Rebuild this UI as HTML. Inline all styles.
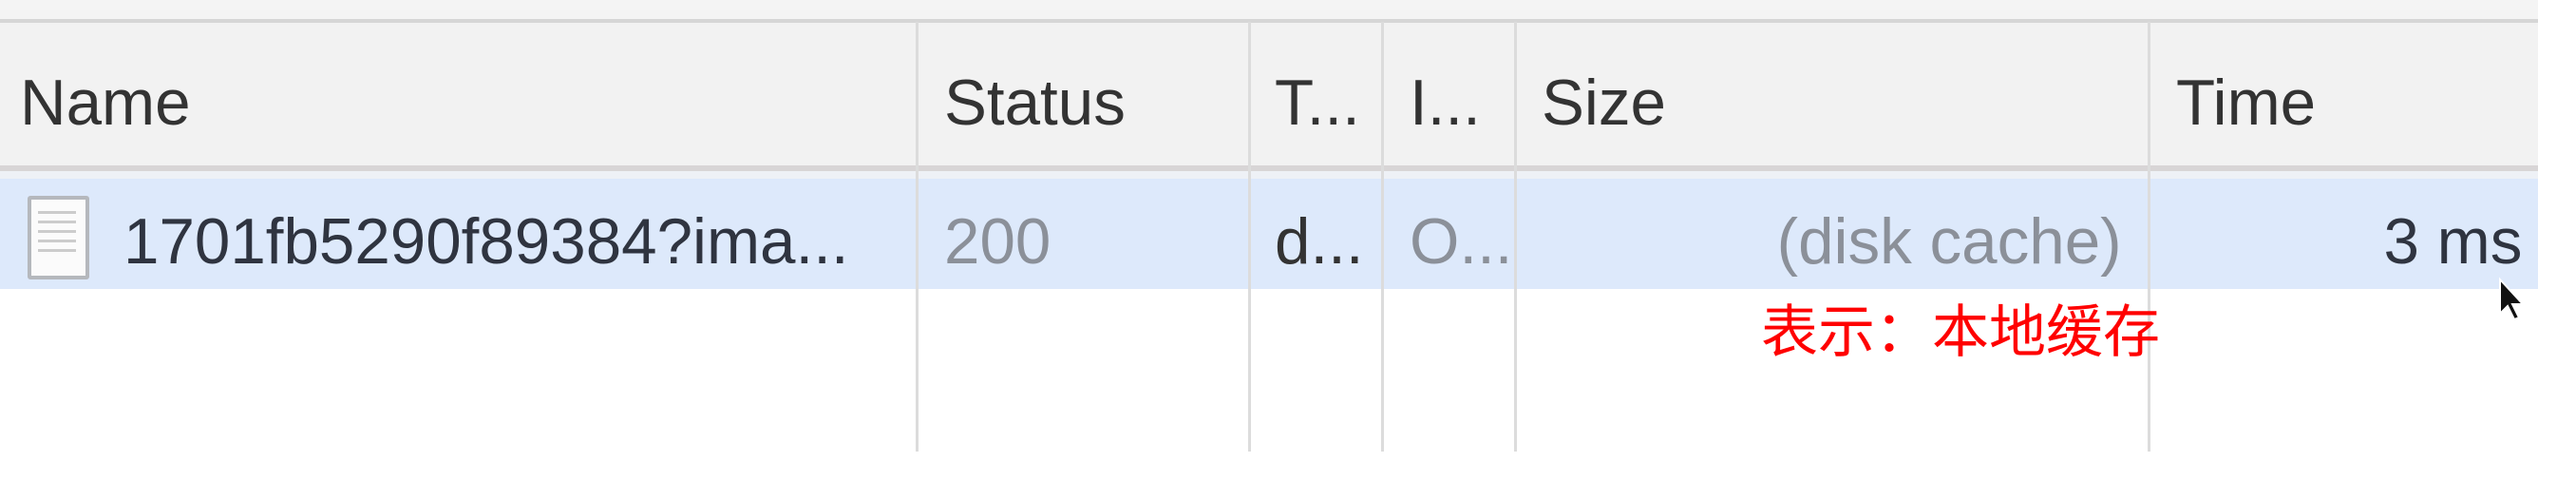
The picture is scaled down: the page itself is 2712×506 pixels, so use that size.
<!DOCTYPE html>
<html><head><meta charset="utf-8"><style>
*{margin:0;padding:0;box-sizing:border-box}
body{width:2712px;height:506px;background:#fff;position:relative;overflow:hidden;font-family:"Liberation Sans","Noto Sans CJK SC",sans-serif}
.a{position:absolute}
.t{position:absolute;font-size:68px;line-height:1;white-space:nowrap;transform:scaleX(0.99);transform-origin:left center;color:#333}
.r{transform-origin:right center}
.g{color:#8b9099}
.v{position:absolute;top:23px;width:3px;height:452px;background:#dcdcdc}
</style></head><body>
<div class="a" style="left:0;top:0;width:2672px;height:23px;background:#f4f4f4"></div>
<div class="a" style="left:0;top:20px;width:2672px;height:4px;background:#d6d6d6"></div>
<div class="a" style="left:0;top:24px;width:2672px;height:152px;background:#f2f2f2"></div>
<div class="a" style="left:0;top:174px;width:2672px;height:6px;background:#d8d5d6"></div>
<div class="a" style="left:0;top:180px;width:2672px;height:8px;background:#eef1f6"></div>
<div class="a" style="left:0;top:188px;width:2672px;height:116px;background:#dde9fb"></div>
<div class="v" style="left:964px"></div>
<div class="v" style="left:1314px"></div>
<div class="v" style="left:1454px"></div>
<div class="v" style="left:1594px"></div>
<div class="v" style="left:2261px"></div>
<div class="t" style="left:21px;top:74px">Name</div>
<div class="t" style="left:994px;top:74px">Status</div>
<div class="t" style="left:1342px;top:74px">T...</div>
<div class="t" style="left:1484px;top:74px">I...</div>
<div class="t" style="left:1623px;top:74px">Size</div>
<div class="t" style="left:2291px;top:74px">Time</div>
<div class="a" style="left:29px;top:206px;width:65px;height:88px;background:#fbfbfb;border:4px solid #b5b8bd;border-radius:3px"></div>
<div class="a" style="left:40px;top:222px;width:40px;height:50px;background:repeating-linear-gradient(#ccc 0 3px,transparent 3px 10px)"></div>
<div class="t" style="left:130px;top:220px;color:#2f3440">1701fb5290f89384?ima...</div>
<div class="t g" style="left:994px;top:220px">200</div>
<div class="t" style="left:1342px;top:220px">d...</div>
<div class="t g" style="left:1484px;top:220px">O...</div>
<div class="t g r" style="right:478px;top:220px">(disk cache)</div>
<div class="t r" style="right:57px;top:220px;color:#2f3440">3 ms</div>
<div class="a" style="left:1854px;top:320px;font-size:60px;line-height:1;color:#f00;white-space:nowrap">表示：本地缓存</div>
<svg class="a" style="left:2620px;top:290px" width="60" height="80" viewBox="0 0 60 80"><path d="M12 4 L12 40 L20 32 L27 46 L32 44 L25 30 L36 30 Z" fill="#111" stroke="#fff" stroke-width="2"/></svg>
</body></html>
